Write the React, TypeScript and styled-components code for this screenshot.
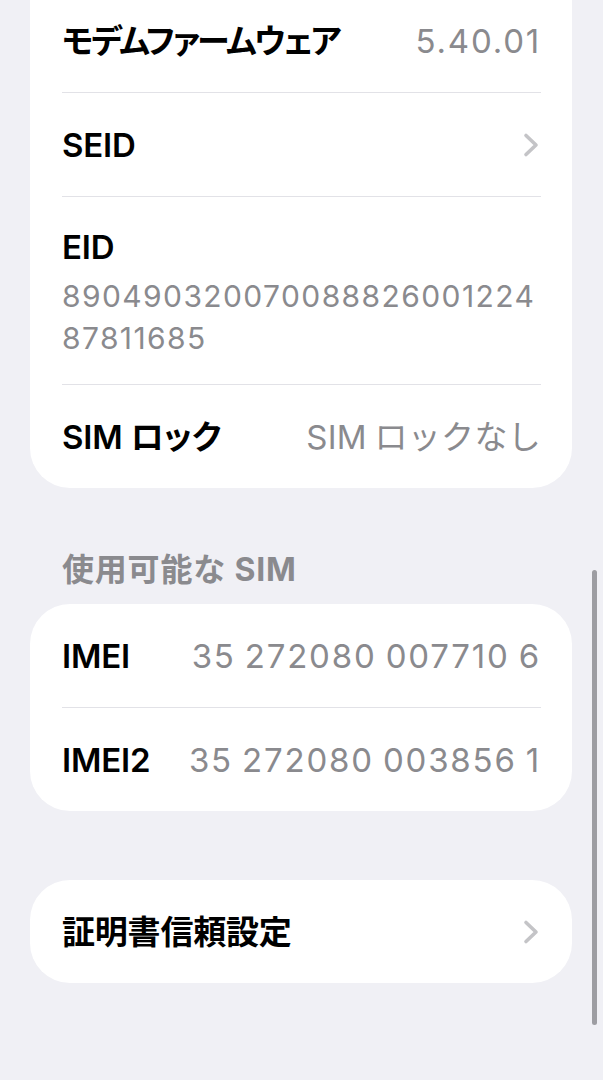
import React from "react";
import styled, { createGlobalStyle } from "styled-components";

const Global = createGlobalStyle`
  html, body { margin: 0; padding: 0; background: #f0f0f5; }
  body {
    font-family: Inter, "Noto Sans CJK JP", sans-serif;
    -webkit-font-smoothing: antialiased;
  }
`;

const Page = styled.div`
  position: relative;
  width: 603px;
  height: 1080px;
  overflow: hidden;
  background: #f0f0f5;
`;

const Content = styled.div`
  display: flex;
  flex-direction: column;
`;

const Card = styled.div<{ $clipTop?: boolean; $gapTop?: number }>`
  background: #ffffff;
  border-radius: 40px;
  margin: ${(p) => (p.$clipTop ? "-51px" : `${p.$gapTop ?? 0}px`)} 31px 0 30px;
  padding-top: ${(p) => (p.$clipTop ? "40px" : "0")};
  display: flex;
  flex-direction: column;
  overflow: hidden;
`;

const Row = styled.div`
  display: flex;
  align-items: center;
  justify-content: space-between;
  min-height: 103px;
  padding: 0 31px 0 32px;
  box-sizing: border-box;
  gap: 16px;
`;

const StackRow = styled.div`
  display: flex;
  flex-direction: column;
  padding: 30px 31px 25px 32px;
  gap: 8px;
`;

const Label = styled.span<{ $tight?: boolean }>`
  font-size: 33px;
  line-height: 40px;
  font-weight: 600;
  color: #000;
  white-space: nowrap;
  font-feature-settings: "palt";
  letter-spacing: ${(p) => (p.$tight ? "-2.1px" : "-0.2px")};
`;

const Value = styled.span<{ $cjk?: boolean }>`
  font-size: 33px;
  line-height: 40px;
  font-weight: 400;
  color: #8a8a8e;
  white-space: nowrap;
  letter-spacing: ${(p) => (p.$cjk ? "0.3px" : "1.8px")};
  word-spacing: ${(p) => (p.$cjk ? "-2px" : "-2px")};
`;

const LongValue = styled.div`
  font-size: 30px;
  line-height: 42px;
  font-weight: 400;
  color: #8a8a8e;
  word-break: break-all;
  letter-spacing: 1.4px;
`;

const Separator = styled.div`
  height: 1px;
  background: #e2e2e7;
  margin: 0 31px 0 32px;
`;

const SectionHeader = styled.div`
  font-size: 32px;
  line-height: 40px;
  font-weight: 700;
  color: #8a8a8e;
  padding: 0 32px 0 62px;
  margin: 62px 0 14px;
  letter-spacing: 0.8px;
`;

const ChevronWrap = styled.span`
  display: flex;
  align-items: center;
  width: 19px;
  height: 26px;
  color: #c4c4c7;
`;

const ScrollBar = styled.div`
  position: absolute;
  right: 6px;
  top: 570px;
  width: 5px;
  height: 455px;
  border-radius: 3px;
  background: #8e8e93;
  opacity: 0.85;
`;

const Chevron = () => (
  <ChevronWrap>
    <svg width="19" height="26" viewBox="0 0 19 26" fill="none">
      <path
        d="M4 3.5 L14 13 L4 22.5"
        stroke="currentColor"
        strokeWidth="3.6"
        strokeLinecap="round"
        strokeLinejoin="round"
      />
    </svg>
  </ChevronWrap>
);

export default function App() {
  return (
    <Page>
      <Global />
      <Content>
        <Card $clipTop>
          <Row>
            <Label $tight>モデムファームウェア</Label>
            <Value>5.40.01</Value>
          </Row>
          <Separator />
          <Row>
            <Label>SEID</Label>
            <Chevron />
          </Row>
          <Separator />
          <StackRow>
            <Label>EID</Label>
            <LongValue>89049032007008882600122487811685</LongValue>
          </StackRow>
          <Separator />
          <Row>
            <Label>SIM ロック</Label>
            <Value $cjk>SIM ロックなし</Value>
          </Row>
        </Card>

        <SectionHeader>使用可能な SIM</SectionHeader>

        <Card>
          <Row>
            <Label>IMEI</Label>
            <Value>35 272080 007710 6</Value>
          </Row>
          <Separator />
          <Row>
            <Label>IMEI2</Label>
            <Value>35 272080 003856 1</Value>
          </Row>
        </Card>

        <Card $gapTop={69}>
          <Row>
            <Label>証明書信頼設定</Label>
            <Chevron />
          </Row>
        </Card>
      </Content>
      <ScrollBar />
    </Page>
  );
}
